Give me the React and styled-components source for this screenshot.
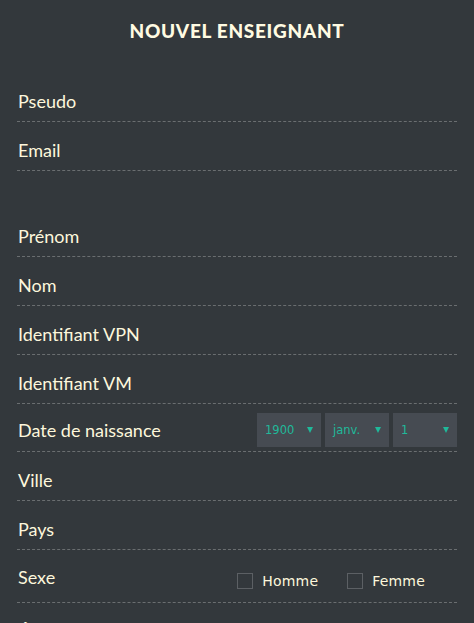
import React from 'react'
import styled, { createGlobalStyle } from 'styled-components'

const GlobalStyle = createGlobalStyle`
  html, body {
    margin: 0;
    padding: 0;
    background: #33383c;
  }
  body {
    font-family: 'Lato', 'Noto Sans', sans-serif;
    color: #fdf7dc;
  }
`

const Page = styled.div`
  padding: 0 17px;
  height: 623px;
  overflow: hidden;
`

const Title = styled.h1`
  margin: 0;
  padding: 20px 0 0;
  height: 73px;
  box-sizing: border-box;
  text-align: center;
  font-family: 'Lato', sans-serif;
  font-weight: 900;
  font-size: 19px;
  line-height: 22px;
  letter-spacing: 0.7px;
  color: #fffbe2;
`

const Group = styled.div`
  display: flex;
  flex-direction: column;
  margin-bottom: ${(p) => p.gap || 0}px;
`

const Row = styled.div`
  display: flex;
  align-items: center;
  justify-content: space-between;
  padding: ${(p) => p.pad || '18px 0 10px'};
  border-bottom: 1px dashed #6a6e70;
`

const Label = styled.span`
  font-size: 18px;
  line-height: 20px;
  padding-left: 1px;
`

const Selects = styled.div`
  display: flex;
  gap: 4px;
`

const Select = styled.div`
  width: 64px;
  height: 34px;
  box-sizing: border-box;
  padding: 0 8px;
  background: #464b52;
  display: flex;
  align-items: center;
  justify-content: space-between;
  color: #1fb99a;
  font-family: 'DejaVu Sans', sans-serif;
  font-size: 11.5px;
`

const Arrow = styled.span`
  width: 0;
  height: 0;
  border-left: 3.5px solid transparent;
  border-right: 3.5px solid transparent;
  border-top: 6px solid #1fb99a;
`

const Choices = styled.div`
  display: flex;
  align-items: center;
  margin-right: 32px;
  margin-top: 8px;
  gap: 29px;
`

const Choice = styled.label`
  display: flex;
  align-items: center;
  gap: 9px;
  font-family: 'DejaVu Sans', sans-serif;
  font-size: 14px;
  letter-spacing: 0.2px;
  color: #fdf7dc;
`

const Box = styled.span`
  width: 16px;
  height: 16px;
  box-sizing: border-box;
  border: 1px solid #5c6064;
`

const SelectBox = ({ value }) => (
  <Select>
    <span>{value}</span>
    <Arrow />
  </Select>
)

export default function App() {
  return (
    <Page>
      <GlobalStyle />
      <Title>NOUVEL ENSEIGNANT</Title>
      <Group gap={37}>
        <Row><Label>Pseudo</Label></Row>
        <Row><Label>Email</Label></Row>
      </Group>
      <Group>
        <Row><Label>Prénom</Label></Row>
        <Row><Label>Nom</Label></Row>
        <Row><Label>Identifiant VPN</Label></Row>
        <Row><Label>Identifiant VM</Label></Row>
        <Row pad="9px 0 4px">
          <Label>Date de naissance</Label>
          <Selects>
            <SelectBox value="1900" />
            <SelectBox value="janv." />
            <SelectBox value="1" />
          </Selects>
        </Row>
        <Row><Label>Ville</Label></Row>
        <Row><Label>Pays</Label></Row>
        <Row pad="15px 0 13px">
          <Label>Sexe</Label>
          <Choices>
            <Choice><Box />Homme</Choice>
            <Choice><Box />Femme</Choice>
          </Choices>
        </Row>
        <Row><Label>Établissement</Label></Row>
      </Group>
    </Page>
  )
}
